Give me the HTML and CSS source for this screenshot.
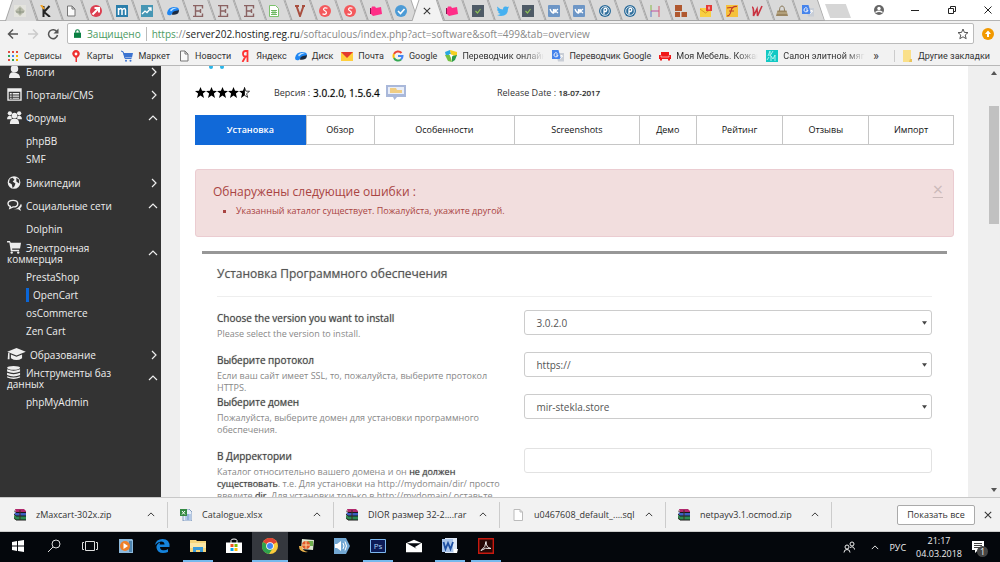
FILE: index.html
```html
<!DOCTYPE html>
<html lang="ru">
<head>
    <meta charset="UTF-8">
    <meta name="viewport" content="width=device-width, initial-scale=1.0">
    <title>Softaculous - OpenCart</title>
    <link rel="stylesheet" href="styles.css">
</head>
<body>

<!-- shared icons -->
<svg class="defs" aria-hidden="true">
    <symbol id="doc" viewBox="0 0 12 12"><path d="M2.500 1h4.500l3 3v7H2.500z M7 1v3h3" fill="#fafafa" stroke="#777"/></symbol>
    <symbol id="letter-e" viewBox="0 0 12 12"><path d="M1 .5h9.500v3M1 11.500h9.500V8.500M3.500 .5v11M3.500 6h5M8.500 4v4" fill="none" stroke="#8a6262" stroke-width="1.400"/></symbol>
    <symbol id="disk" viewBox="0 0 12 12"><path d="M0 8Q1 2 7 2q5 0 5 3-1 2-4 2.500T4 10Q0 11 0 8z" fill="#1f86f2"/><path d="M5 9.500q0-3 3-3.500t4-1q0 4-3.500 4.500T5 9.500z" fill="#1b2a40"/><path d="M3 5q3-3 7-2-4 .5-6 3.500z" fill="#bfe2ff"/></symbol>
    <symbol id="red-s" viewBox="0 0 12 12"><circle cx="6" cy="6" r="6" fill="#f4595c"/><path d="M8.500 3.200Q5 2 4.500 4.300C4.500 6 7.800 5.800 7.400 8 7 9.800 4.500 9.500 3.500 8.800" fill="none" stroke="#fff" stroke-width="1.200"/></symbol>
    <symbol id="pink" viewBox="0 0 12 12"><path d="M1 4l1-2.500h3L6 3l5-1 1 7-9 2L1 9z" fill="#ff2d87"/><path d="M.5 3v6" stroke="#8a1350"/></symbol>
    <symbol id="check-dark" viewBox="0 0 12 12"><path d="M0 0h12v12H0z" fill="#4e5a66"/><path d="M3.500 6l2 2 3-4" fill="none" stroke="#8fc257" stroke-width="1.200"/></symbol>
    <symbol id="vk" viewBox="0 0 12 12"><rect width="12" height="12" rx="1" fill="#6d96c6"/><path d="M2 4q1.500 4 3.500 4V4M5.500 6q1.500 0 2-2M7 4v4M10 4L7.500 6 10 8" fill="none" stroke="#fff" stroke-width="1.300"/></symbol>
    <symbol id="blue-r" viewBox="0 0 12 12"><circle cx="6" cy="6" r="6" fill="#2d6d9b"/><circle cx="6" cy="6" r="4.300" fill="none" stroke="#fff" stroke-width=".8"/><path d="M5 9.500V4.500q0-1.500 2-1.200 1.500 1.500 0 3.200H5" fill="none" stroke="#fff" stroke-width="1.300"/></symbol>
    <symbol id="translate" viewBox="0 0 12 12"><path d="M4 3h8v8.500H6z" fill="#c9ced6"/><path d="M0 0h6.500l2.500 9H0z" fill="#4684ec"/><path d="M5.500 3.500A2 2 0 1 0 6 5H4M8 6h3M9.500 5v1M8 9l2.500-3" fill="none" stroke="#fff" stroke-width=".9"/></symbol>
    <symbol id="winrar" viewBox="0 0 12 12"><path d="M1 0h9l2 2v2H2z" fill="#b0286c"/><path d="M1 3l1 1h10v3H2L0 6z" fill="#3a5fc0"/><path d="M0 6l2 1h10v4H2L0 10z" fill="#2d8a50"/><path d="M2 3.500h10M2 7h10M2 11h10" stroke="#191919"/><path d="M0 1.500l2 2M0 5l2 2M0 8.500l2 2.500M6 1v10" stroke="#3e2a25"/></symbol>
    <symbol id="up" viewBox="0 0 10 6"><path d="M1 5l4-4 4 4" fill="none" stroke="currentColor" stroke-width="1.200"/></symbol>
    <symbol id="right" viewBox="0 0 6 10"><path d="M1 1l4 4-4 4" fill="none" stroke="currentColor" stroke-width="1.200"/></symbol>
    <symbol id="cross" viewBox="0 0 10 10"><path d="M1 1l8 8M9 1L1 9" fill="none" stroke="currentColor" stroke-width="1.300"/></symbol>
    <symbol id="star" viewBox="0 0 12 12"><path d="M6 0l1.700 4.200 4.300.2-3.400 2.800L9.800 12 6 9.200 2.200 12l1.200-4.800L0 4.400l4.300-.2z"/></symbol>
</svg>

<header class="tab-strip">
    <div class="tabs">
        <button class="tab" aria-label="Tab 1"><svg viewBox="0 0 12 12"><path d="M0 0h12v12H0z" fill="#e3e3dd"/><path d="M6 1l5 5-5 5-5-5z" fill="#b9bcab"/><path d="M2 7h8M6 3v6" stroke="#8b9382"/></svg></button>
        <button class="tab" aria-label="Tab 2"><svg viewBox="0 0 12 12"><path d="M3.500 1v11M9.500 1L4 7l6 5" fill="none" stroke="#222" stroke-width="2"/><path d="M1 0l3 4" stroke="#f0a020" stroke-width="2"/></svg></button>
        <button class="tab" aria-label="Tab 3"><svg><use href="#doc"/></svg></button>
        <button class="tab" aria-label="Tab 4"><svg viewBox="0 0 12 12"><circle cx="6" cy="6" r="6" fill="#dc3f50"/><path d="M2.500 9.500l6-6M4.500 3h4.500v4.500" fill="none" stroke="#fff" stroke-width="2"/></svg></button>
        <button class="tab" aria-label="Tab 5"><svg viewBox="0 0 12 12"><path d="M0 0h12v12H0z" fill="#2a7eab"/><path d="M2.500 10V3M2.500 5q3-3 3.500 0v5M6 5q3-3 3.500 0v5" fill="none" stroke="#fff" stroke-width="1.500"/></svg></button>
        <button class="tab" aria-label="Tab 6"><svg viewBox="0 0 12 12"><path d="M0 0h12v12H0z" fill="#4696b4"/><path d="M1 9l3-3 2 1.500L10 3M7 3h3v3" fill="none" stroke="#fff" stroke-width="1.300"/></svg></button>
        <button class="tab" aria-label="Tab 7"><svg><use href="#disk"/></svg></button>
        <button class="tab" aria-label="Tab 8"><svg><use href="#letter-e"/></svg></button>
        <button class="tab" aria-label="Tab 9"><svg><use href="#letter-e"/></svg></button>
        <button class="tab" aria-label="Tab 10"><svg><use href="#letter-e"/></svg></button>
        <button class="tab" aria-label="Tab 11"><svg viewBox="0 0 12 12"><path d="M1.500 .5h6l3 3v8h-9z" fill="#fff" stroke="#7cc26d"/><path d="M3 5.500h6M3 7.500h6M3 9.500h6M5 5v5M7 5v5" stroke="#65b358" stroke-width=".9"/></svg></button>
        <button class="tab" aria-label="Tab 12"><svg viewBox="0 0 12 12"><path d="M1 1h4M8 1h3M2.500 1L6 11l3.500-10" fill="none" stroke="#a94f3f" stroke-width="2"/></svg></button>
        <button class="tab" aria-label="Tab 13"><svg><use href="#red-s"/></svg></button>
        <button class="tab" aria-label="Tab 14"><svg><use href="#red-s"/></svg></button>
        <button class="tab" aria-label="Tab 15"><svg><use href="#pink"/></svg></button>
        <button class="tab" aria-label="Tab 16"><svg viewBox="0 0 12 12"><circle cx="6" cy="6" r="6" fill="#4c9bd6"/><path d="M3 6l2.500 2.500L9.500 4" fill="none" stroke="#fff" stroke-width="1.600"/></svg></button>
        <button class="tab active" aria-label="Close tab"><svg class="tab-close"><use href="#cross"/></svg></button>
        <button class="tab" aria-label="Tab 18"><svg><use href="#pink"/></svg></button>
        <button class="tab" aria-label="Tab 19"><svg><use href="#check-dark"/></svg></button>
        <button class="tab" aria-label="Tab 20"><svg viewBox="0 0 12 12"><path d="M0 1.500q3 3 6 3Q6 1 9 1.500l1.500.5L12 1.500 11 4q0 7-7 7-2 0-4-1 2 0 3.500-1-2-.5-2.500-2h1Q0 6 0 4l1 .5Q0 3 0 1.500z" fill="#45b0f0"/></svg></button>
        <button class="tab" aria-label="Tab 21"><svg><use href="#check-dark"/></svg></button>
        <button class="tab" aria-label="Tab 22"><svg><use href="#vk"/></svg></button>
        <button class="tab" aria-label="Tab 23"><svg><use href="#vk"/></svg></button>
        <button class="tab" aria-label="Tab 24"><svg><use href="#blue-r"/></svg></button>
        <button class="tab" aria-label="Tab 25"><svg><use href="#blue-r"/></svg></button>
        <button class="tab" aria-label="Tab 26"><svg viewBox="0 0 12 12"><path d="M2 0v6" stroke="#88b848"/><path d="M2 6v6" stroke="#5e7fc4"/><path d="M2 6h8" stroke="#c050a0"/><path d="M10 1v11" stroke="#d65a70"/></svg></button>
        <button class="tab" aria-label="Tab 27"><svg viewBox="0 0 12 12"><path d="M0 0h7v6H0zM0 7h5v5H0zM6.500 7H12v5H6.500z" fill="#b0582f"/></svg></button>
        <button class="tab" aria-label="Tab 28"><svg viewBox="0 0 12 12"><path d="M0 3h11v9H0z" fill="#f8cf42"/><path d="M0 4l5.500 4L11 4" fill="none" stroke="#d89c20"/><path d="M6 0h6v6H6z" fill="#e53935"/><path d="M9 1.500v3" stroke="#fff"/></svg></button>
        <button class="tab" aria-label="Tab 29"><svg viewBox="0 0 12 12"><path d="M0 0h12v12H0z" fill="#f5c13a"/><path d="M1 11q3 0 4-5 1-5 6-4.500M3 6h5M1 3q4-1 6 0" fill="none" stroke="#c0392b" stroke-width="1.200"/></svg></button>
        <button class="tab" aria-label="Tab 30"><svg viewBox="0 0 12 12"><path d="M1 2q2 0 1.500 9L6 4l.5 7L11 1" fill="none" stroke="#c83240" stroke-width="1.600"/></svg></button>
        <button class="tab" aria-label="Tab 31"><svg viewBox="0 0 12 12"><path d="M3.500 6q0-5 2.500-5t2.500 5" fill="none" stroke="#8a7a5c"/><path d="M1.500 5.500h9L12 11H0z" fill="#9a8560"/><path d="M1 8h10" stroke="#c9b993"/></svg></button>
        <button class="tab" aria-label="Tab 32"><svg><use href="#translate"/></svg></button>
    </div>
    <button class="new-tab" aria-label="New tab"></button>
    <div class="window-buttons">
        <button aria-label="Profile"><svg viewBox="0 0 12 12"><circle cx="6" cy="6" r="5" fill="#666"/><circle cx="6" cy="4.500" r="1.700" fill="#fff"/><path d="M2.500 8.500q3.500-2.500 7 0" fill="none" stroke="#fff" stroke-width="1.500"/></svg></button>
        <button aria-label="Minimize"><svg viewBox="0 0 12 12"><path d="M2 6.500h8" stroke="#222"/></svg></button>
        <button aria-label="Restore"><svg viewBox="0 0 12 12"><path d="M2.500 4.500h5v5h-5zM4.500 4V2.500h5v5H8" fill="none" stroke="#222"/></svg></button>
        <button aria-label="Close"><svg viewBox="0 0 12 12"><path d="M2.500 2.500l7 7M9.500 2.500l-7 7" stroke="#222"/></svg></button>
    </div>
</header>

<div class="toolbar">
    <button aria-label="Back"><svg viewBox="0 0 12 12"><path d="M11 6H2M6 1.500L1.500 6 6 10.500" fill="none" stroke="#555" stroke-width="1.500"/></svg></button>
    <button aria-label="Forward"><svg viewBox="0 0 12 12"><path d="M1 6h9M6 1.500L10.500 6 6 10.500" fill="none" stroke="#ccc" stroke-width="1.500"/></svg></button>
    <button aria-label="Reload"><svg viewBox="0 0 12 12"><path d="M10 4A4.500 4.500 0 1 0 10.500 7" fill="none" stroke="#555" stroke-width="1.500"/><path d="M11.500 .5v5h-5z" fill="#555"/></svg></button>
    <div class="address">
        <svg class="lock" viewBox="0 0 8 10"><path d="M0 4h8v6H0z" fill="#0b8043"/><path d="M2 4V2.500q0-1.800 2-1.800t2 1.800V4" fill="none" stroke="#0b8043" stroke-width="1.300"/></svg>
        <span class="secure">Защищено</span>
        <span class="url"><span class="scheme">https</span>://<b>server202.hosting.reg.ru</b>/softaculous/index.php?act=software&amp;soft=499&amp;tab=overview</span>
        <svg class="bookmark-star" viewBox="0 0 12 12"><path d="M6 1l1.400 3.400 3.600.2-2.800 2.400 1 3.700L6 8.800l-3.200 1.900 1-3.700L1 4.600l3.600-.2z" fill="none" stroke="#555"/></svg>
    </div>
    <button aria-label="Update"><svg viewBox="0 0 12 12"><circle cx="6" cy="6" r="6" fill="#f29900"/><path d="M6 2.500l3 3.500H7v3H5V6H3z" fill="#fff"/></svg></button>
</div>

<nav class="bookmarks">
    <a href="#"><svg viewBox="0 0 12 12"><path d="M1 1h2v2H1zM1 9h2v2H1zM9 1h2v2H9z" fill="#e04a3f"/><path d="M5 1h2v2H5z" fill="#e04a3f"/><path d="M1 5h2v2H1zM5 9h2v2H5z" fill="#2fa35a"/><path d="M5 5h2v2H5z" fill="#4285f4"/><path d="M9 5h2v2H9zM9 9h2v2H9z" fill="#f4b400"/></svg>Сервисы</a>
    <a href="#"><svg viewBox="0 0 12 12"><path d="M6 0a3.800 3.800 0 0 1 3.800 4Q9.500 6.500 7 8v4H5.500V8Q2.500 6.500 2.200 4A3.800 3.800 0 0 1 6 0z" fill="#ee2f2f"/><circle cx="6" cy="4" r="1.400" fill="#fff"/></svg>Карты</a>
    <a href="#"><svg viewBox="0 0 12 12"><path d="M0 1l2 1 1.500 5.500H11L12 3H2.500z" fill="#3b73d1"/><path d="M0 1l2.200.8L4 8.500h6.500" fill="none" stroke="#3b73d1"/><circle cx="5" cy="10.800" r="1" fill="#3b73d1"/><circle cx="9.500" cy="10.800" r="1" fill="#3b73d1"/></svg>Маркет</a>
    <a href="#"><svg><use href="#doc"/></svg>Новости</a>
    <a href="#"><svg viewBox="0 0 12 12"><path d="M8.500 12V1H6.500Q4 1 4 3.800T6.500 6.500h2M6.500 6.500L3.500 12" fill="none" stroke="#f33" stroke-width="1.800"/></svg>Яндекс</a>
    <a href="#"><svg><use href="#disk"/></svg>Диск</a>
    <a href="#"><svg viewBox="0 0 12 12"><path d="M0 2h12v9H0z" fill="#ffcf3d"/><path d="M0 2h12L6 8z" fill="#e33a2e"/></svg>Почта</a>
    <a href="#"><svg viewBox="0 0 12 12"><path d="M9.500 3A4.500 4.500 0 0 0 2 4" fill="none" stroke="#ea4335" stroke-width="2"/><path d="M2 4a4.500 4.500 0 0 0 0 4" fill="none" stroke="#fbbc05" stroke-width="2"/><path d="M2 8a4.500 4.500 0 0 0 7 1.500" fill="none" stroke="#34a853" stroke-width="2"/><path d="M9 9.500Q10.500 8 10.500 6H6" fill="none" stroke="#4285f4" stroke-width="2"/></svg>Google</a>
    <a href="#" class="long"><svg viewBox="0 0 12 12"><path d="M0 2l5-2 1 4-5 2z" fill="#2aa8e0"/><path d="M5 0l7 2v4L6 5z" fill="#f5d020"/><path d="M0 5l5 0 2 7-4-1z" fill="#74c041"/><path d="M7 6l5-1-2 5-3 2z" fill="#2b9b4a"/><path d="M4 4l4 1-1.500 3z" fill="#fff"/></svg><span>Переводчик онлайн</span></a>
    <a href="#"><svg><use href="#translate"/></svg>Переводчик Google</a>
    <a href="#" class="long"><svg viewBox="0 0 12 12"><path d="M2 2h8v3h2v4H0V5h2zM1 9h2v1.500H1zM9 9h2v1.500H9z" fill="#f01818"/><path d="M2 5.500V7h8V5.500" fill="none" stroke="#fff" stroke-width=".6"/></svg><span>Моя Мебель. Кожан</span></a>
    <a href="#" class="long"><svg viewBox="0 0 12 12"><path d="M0 0h12v12H0z" fill="#12c9c4"/><path d="M2 6l2-5v5l3-5M5 11V6l2 3 2-4v6M1 10l2-3" fill="none" stroke="#bdf6f0" stroke-width=".9"/></svg><span>Салон элитной мягк</span></a>
    <span class="more">»</span>
    <a href="#" class="other"><svg viewBox="0 0 12 12"><path d="M2 0h8v10l-1 2H2z" fill="#fae08a"/><path d="M9 9h2v3H8z" fill="#eac45a"/></svg>Другие закладки</a>
</nav>

<div class="viewport">
    <nav class="sidebar">
        <button class="group"><span><svg viewBox="0 0 16 14"><circle cx="8" cy="4" r="4"/><path d="M2 14q0-7 6-6t6 6z"/></svg>Блоги</span><svg class="chevron right"><use href="#right"/></svg></button>
        <button class="group"><span><svg viewBox="0 0 16 14"><path d="M1 1h14v12H1z" fill="none" stroke="#eee" stroke-width="1.500"/><path d="M1 1h14v3H1zM3 5.500h2v1.500H3zM3 8h2v1.500H3zM3 10.500h2v1H3zM6 5.500h7v1.500H6zM6 8h7v1.500H6zM6 10.500h7v1H6z"/></svg>Порталы/CMS</span><svg class="chevron right"><use href="#right"/></svg></button>
        <button class="group"><span><svg viewBox="0 0 16 14"><circle cx="3" cy="2.500" r="2.300"/><circle cx="13" cy="2.500" r="2.300"/><path d="M0 9q0-4 3-4l2 1v3zM16 9q0-4-3-4l-2 1v3z"/><circle cx="8" cy="5" r="3"/><path d="M3 14q0-6 5-5.500 5-.5 5 5.500z"/></svg>Форумы</span><svg class="chevron"><use href="#up"/></svg></button>
        <ul>
            <li><a href="#">phpBB</a></li>
            <li><a href="#">SMF</a></li>
        </ul>
        <button class="group"><span><svg viewBox="0 0 16 14"><circle cx="7.500" cy="7" r="6.800"/><path d="M3 3l3-1 2 2-2 2 3 2-1 3-2 2-1-4-3-2zM10 2l3 2v4l-3-2z" fill="#333"/></svg>Википедии</span><svg class="chevron right"><use href="#right"/></svg></button>
        <button class="group"><span><svg viewBox="0 0 16 14"><path d="M15 5q2 3-1 5l1 3-3-2H7q5 0 8-6z"/><path d="M6.500 1.500q5 0 5 3.500t-5 3.500L3 10l.5-2Q1 7 1 5q0-3.500 5.500-3.500z" fill="none" stroke="#eee" stroke-width="1.500"/></svg>Социальные сети</span><svg class="chevron"><use href="#up"/></svg></button>
        <ul>
            <li><a href="#">Dolphin</a></li>
        </ul>
        <button class="group wrap"><span><svg viewBox="0 0 16 14"><path d="M0 0h3l1 2h11l-1 6H5.500v1.500H13V11H4L2.500 1.500H0z"/><circle cx="5" cy="12.500" r="1.300"/><circle cx="12" cy="12.500" r="1.300"/></svg>Электронная<br>коммерция</span><svg class="chevron"><use href="#up"/></svg></button>
        <ul>
            <li><a href="#">PrestaShop</a></li>
            <li><a href="#" class="current">OpenCart</a></li>
            <li><a href="#">osCommerce</a></li>
            <li><a href="#">Zen Cart</a></li>
        </ul>
        <button class="group"><span><svg class="wide" viewBox="0 0 20 14"><path d="M10 0l10 4-10 4L0 4z"/><path d="M4 7l6 2.500L16 7v4q-6 4-12 0zM1 5h1.500v7H.5z"/></svg>Образование</span><svg class="chevron right"><use href="#right"/></svg></button>
        <button class="group wrap"><span><svg viewBox="0 0 16 14"><ellipse cx="7" cy="2" rx="7" ry="2"/><path d="M0 3.500q7 3 14 0V6q-7 3-14 0zM0 7.300q7 3 14 0v2.500q-7 3-14 0zM0 11q7 3 14 0v1.500q-7 3-14 0z"/></svg>Инструменты баз<br>данных</span><svg class="chevron"><use href="#up"/></svg></button>
        <ul>
            <li><a href="#">phpMyAdmin</a></li>
        </ul>
    </nav>

    <main class="content">
        <svg class="logo" viewBox="0 0 16 4"><circle cx="2" cy="1" r="2"/><circle cx="13" cy="1" r="2"/></svg>
        <div class="info">
            <div class="stars">
                <svg><use href="#star"/></svg><svg><use href="#star"/></svg><svg><use href="#star"/></svg><svg><use href="#star"/></svg><svg viewBox="0 0 12 12"><path d="M6 .5l1.500 4 4 .2-3.200 2.600 1.200 4L6 9z" fill="#fff" stroke="#000" stroke-width=".8"/><path d="M6 0v9.200L2.200 12l1.200-4.800L0 4.400l4.300-.2z"/></svg>
            </div>
            <div class="version">Версия : <b>3.0.2.0, 1.5.6.4</b>
                <svg viewBox="0 0 20 15"><path d="M0 0h20v12h-9l-2.500 3L7 12H0z" fill="#a9b8da"/><path d="M2 2h16v7H2z" fill="#e9eef8"/><path d="M4 3h6l1 2h5v3H4z" fill="#f0cd83"/></svg>
            </div>
            <div class="release">Release Date : <b>18-07-2017</b></div>
        </div>

        <nav class="page-tabs">
            <a href="#" class="selected">Установка</a>
            <a href="#">Обзор</a>
            <a href="#">Особенности</a>
            <a href="#">Screenshots</a>
            <a href="#">Демо</a>
            <a href="#">Рейтинг</a>
            <a href="#">Отзывы</a>
            <a href="#">Импорт</a>
        </nav>

        <div class="alert">
            <div>
                <h2>Обнаружены следующие ошибки :</h2>
                <ul>
                    <li>Указанный каталог существует. Пожалуйста, укажите другой.</li>
                </ul>
            </div>
            <a href="#" class="close">×</a>
        </div>

        <form class="install">
            <h3>Установка Программного обеспечения</h3>
            <div class="field spaced">
                <div>
                    <label for="version">Choose the version you want to install</label>
                    <p>Please select the version to install.</p>
                </div>
                <select id="version"><option>3.0.2.0</option><option>1.5.6.4</option></select>
            </div>
            <div class="field">
                <div>
                    <label for="protocol">Выберите протокол</label>
                    <p>Если ваш сайт имеет SSL, то, пожалуйста, выберите протокол HTTPS.</p>
                </div>
                <select id="protocol"><option>https://</option><option>http://</option></select>
            </div>
            <div class="field spaced">
                <div>
                    <label for="domain">Выберите домен</label>
                    <p>Пожалуйста, выберите домен для установки программного обеспечения.</p>
                </div>
                <select id="domain"><option>mir-stekla.store</option></select>
            </div>
            <div class="field">
                <div>
                    <label for="directory">В Дирректории</label>
                    <p>Каталог относительно вашего домена и он <b>не должен существовать</b>. т.е. Для установки на http://mydomain/dir/ просто введите <b>dir</b>. Для установки только в http://mydomain/ оставьте</p>
                </div>
                <input type="text" id="directory">
            </div>
        </form>
    </main>

    <div class="scrollbar">
        <svg viewBox="0 0 6 4"><path d="M3 0l3 4H0z"/></svg>
        <div class="thumb"></div>
        <svg viewBox="0 0 6 4"><path d="M0 0h6L3 4z"/></svg>
    </div>
</div>

<div class="downloads">
    <button class="file"><svg><use href="#winrar"/></svg><span>zMaxcart-302x.zip</span><svg class="caret"><use href="#up"/></svg></button>
    <button class="file"><svg viewBox="0 0 12 12"><path d="M3 0h6l3 3v9H3z" fill="#e4edf8" stroke="#5b7cab" stroke-width=".7"/><path d="M5 6h6M5 8h6M5 10h6M8 5v6" stroke="#5b86c4" stroke-width=".7"/><path d="M0 0h7v7H0z" fill="#358a43"/><path d="M2 2l3 3.500M5 2L2 5.500" stroke="#fff"/></svg><span>Catalogue.xlsx</span><svg class="caret"><use href="#up"/></svg></button>
    <button class="file"><svg><use href="#winrar"/></svg><span>DIOR размер 32-2....rar</span><svg class="caret"><use href="#up"/></svg></button>
    <button class="file"><svg viewBox="0 0 12 12"><path d="M2 .5h6l2.500 2.500v8.500H2z M8 .5V3h2.500" fill="#fff" stroke="#bbb"/></svg><span>u0467608_default_....sql</span><svg class="caret"><use href="#up"/></svg></button>
    <button class="file"><svg><use href="#winrar"/></svg><span>netpayv3.1.ocmod.zip</span><svg class="caret"><use href="#up"/></svg></button>
    <button class="show-all">Показать все</button>
    <button class="hide" aria-label="Close downloads"><svg><use href="#cross"/></svg></button>
</div>

<footer class="taskbar">
    <button aria-label="Start"><svg viewBox="0 0 16 16"><path d="M2 4l5-1v4.500H2zM8 3l6-1v5.500H8zM2 8.500h5V13l-5-1zM8 8.500h6V14l-6-1z" fill="#fff"/></svg></button>
    <button aria-label="Search"><svg viewBox="0 0 16 16"><circle cx="10" cy="6" r="4" fill="none" stroke="#ddd"/><path d="M7 9l-5 5" stroke="#ddd"/></svg></button>
    <button aria-label="Task view"><svg viewBox="0 0 16 16"><path d="M3.500 3.500h9v9h-9zM2 4.500H.5v7H2M14 4.500h1.500v7H14" fill="none" stroke="#ddd"/></svg></button>
    <button aria-label="Media player"><svg viewBox="0 0 16 16"><path d="M1 1h13l1 1v13H1z" fill="#8db9dc"/><path d="M11 3h3v11h-3z" fill="#4e84b0"/><circle cx="7" cy="8" r="5" fill="#ef7f28"/><path d="M5.500 5l4.500 3-4.500 3z" fill="#fff"/></svg></button>
    <button aria-label="Edge"><svg viewBox="0 0 16 16"><path d="M3 9h12.500Q16 1 8.500 1 2 1 1 7q3-3.500 6-3.500 3.500 0 3.500 3H5.500Q7 3.500 5 5 2 7 2.500 10q1 5 6.500 5 3 0 5-1v-3q-2 1.500-5 1.200Q6 12 6 9z" fill="#1583dc"/></svg></button>
    <button aria-label="Explorer" class="open"><svg viewBox="0 0 16 16"><path d="M0 2h6l1 1h9v11H0z" fill="#f5d57b"/><path d="M0 5h16v5H0z" fill="#fbe7a5"/><path d="M3 14V9h10v5h-3v-2H6v2z" fill="#3a9ad9"/></svg></button>
    <button aria-label="Store"><svg viewBox="0 0 16 16"><path d="M5 5V2.500Q5 1 8 1t3 1.500V5" fill="none" stroke="#fff"/><path d="M0 4.500h16V15H0z" fill="#fff"/><path d="M4.500 6h3v3h-3z" fill="#f25022"/><path d="M8.500 6h3v3h-3z" fill="#7fba00"/><path d="M4.500 10h3v3h-3z" fill="#00a4ef"/><path d="M8.500 10h3v3h-3z" fill="#ffb900"/></svg></button>
    <button aria-label="Chrome" class="open focused"><svg viewBox="0 0 16 16"><circle cx="8" cy="8" r="8" fill="#fbcb3b"/><path d="M8 8L1 4a8 8 0 0 1 14 0z" fill="#e04435"/><path d="M8 8L1 4a8 8 0 0 0 6 12l4-6z" fill="#2fa34d"/><circle cx="8" cy="8" r="3.800" fill="#fff"/><circle cx="8" cy="8" r="3" fill="#4285f4"/></svg></button>
    <button aria-label="Photos"><svg viewBox="0 0 16 16"><path d="M4 1l12 1-1 10-12-1z" fill="#dfe9d2"/><path d="M10 3h5v5h-5z" fill="#6faf4e"/><circle cx="8" cy="7" r="4" fill="#e0592a"/><path d="M4 7h8M8 3v8" stroke="#fbd9a0"/><path d="M1 8q0 7 9 6-6-1-6-6z" fill="#e8b04c"/></svg></button>
    <button aria-label="Sound"><svg viewBox="0 0 16 16"><path d="M0 0h12l4 8-4 8H0z" fill="#72a7d3"/><path d="M1 6h2l4-3v10l-4-3H1z" fill="#fff"/><path d="M9 5q2 3 0 6M11 3.500q3 4.500 0 9" fill="none" stroke="#fff"/></svg></button>
    <button aria-label="Photoshop" class="open"><svg viewBox="0 0 16 16"><path d="M.5 1.500h15v13H.5z" fill="#0c1b57" stroke="#7cb6ee"/><text x="8" y="11" text-anchor="middle">Ps</text></svg></button>
    <button aria-label="Mail"><svg viewBox="0 0 18 16"><path d="M0 5l9-4 9 4v10H0z" fill="#fff"/><path d="M1 5h16l-7 4 2 2z" fill="#060a10"/></svg></button>
    <button aria-label="Word" class="open"><svg viewBox="0 0 16 16"><path d="M3 0h12v15H3z" fill="#dfe9f7"/><path d="M0 1h11v13H0z" fill="#aac5ea"/><path d="M1.500 4l2 7L6 5l2.500 6 2.500-7" fill="none" stroke="#1d4fa3" stroke-width="1.800"/><path d="M12 11h4l-1 4h-3z" fill="#fff"/></svg></button>
    <button aria-label="Acrobat" class="open"><svg viewBox="0 0 16 16"><path d="M.7 .7h14.600v14.600H.7z" fill="#260806" stroke="#c8190f" stroke-width="1.400"/><path d="M3 12.500q5-3.500 5-9 0 6 5 7-6-1.500-10 2z" fill="none" stroke="#eee"/></svg></button>
    <div class="tray">
        <svg viewBox="0 0 12 12"><circle cx="4" cy="6" r="2"/><path d="M1 11.500q0-3 3-3t3 3"/><circle cx="9" cy="3" r="2"/><path d="M7 6.500q4-2 4.500 2"/></svg>
        <svg class="caret"><use href="#up"/></svg>
        <span class="lang">РУС</span>
        <time datetime="2018-03-04T21:17">21:17<br>04.03.2018</time>
        <div class="notes"><svg viewBox="0 0 12 12"><path d="M0 0h12v9H6l-3 3V9H0z" fill="#fff" stroke="none"/><path d="M2 2.500h8M2 4.500h8M2 6.500h6" stroke="#111" stroke-width=".8"/></svg><span>1</span></div>
    </div>
</footer>

</body>
</html>
```
FILE: styles.css
```css
* {
    box-sizing: border-box;
}
body {
    display: flex;
    flex-direction: column;
    height: 100vh;
    margin: 0;
    overflow: hidden;
    font-family: "Open Sans", "Noto Sans", sans-serif;
    font-size: 9px;
    color: #333;
    background: #f2f2f2;
}
button {
    padding: 0;
    border: none;
    background: none;
    font: inherit;
    color: inherit;
}
a {
    color: inherit;
    text-decoration: none;
}
ul {
    list-style: none;
    margin: 0;
    padding: 0;
}
svg {
    display: block;
    flex: none;
    width: 12px;
    height: 12px;
}
.defs {
    position: absolute;
    width: 0;
    height: 0;
}

/* browser tabs */
.tab-strip {
    display: flex;
    flex: none;
    height: 21px;
    background: #fff;
    border-bottom: 1px solid #b4b4b4;
}
.tabs {
    display: flex;
    flex: 0 1 825px;
    padding-left: 5px;
}
.tab {
    position: relative;
    display: flex;
    flex: 1;
    align-items: center;
    justify-content: center;
    min-width: 0;
    height: 21px;
    margin-right: -7px;
    padding-right: 2px;
}
.tab:last-child {
    margin-right: 0;
}
/* outline and fill; each tab tucks under the slanted edge of the one before */
.tab::before,
.tab::after {
    content: "";
    position: absolute;
    inset: 0;
    background: #a6a6a6;
    clip-path: polygon(0 0, calc(100% - 7px) 0, 100% 100%, 7px 100%);
}
.tab::after {
    background: #d9d9d9;
    clip-path: polygon(1px 0, calc(100% - 8px) 0, calc(100% - 1px) 20px, 8px 20px);
}
.tab:first-child::before,
.tab.active::before {
    clip-path: polygon(7px 0, calc(100% - 7px) 0, 100% 100%, 0 100%);
}
.tab:first-child::after,
.tab.active::after {
    clip-path: polygon(8px 0, calc(100% - 8px) 0, calc(100% - 1px) 100%, 1px 100%);
}
.tab.active::after {
    background: #f2f2f2;
}
.tab.active {
    z-index: 2;
}
.tab svg {
    position: relative;
    z-index: 1;
}
.tab .tab-close {
    width: 8px;
    height: 8px;
}
.new-tab {
    width: 26px;
    height: 14px;
    margin-top: 4px;
    background: #d6d6d6;
    clip-path: polygon(0 0, 80% 0, 100% 100%, 20% 100%);
}
.window-buttons {
    display: flex;
    align-items: center;
    justify-content: space-between;
    width: 121px;
    margin: 0 6px 0 auto;
}

/* address bar */
.toolbar {
    display: flex;
    flex: none;
    align-items: center;
    gap: 8px;
    height: 25px;
    padding: 0 6px 0 7px;
}
.address {
    display: flex;
    flex: 1;
    align-items: center;
    height: 21px;
    padding: 0 4px 0 6px;
    border: 1px solid #bbb;
    border-radius: 2px;
    background: #fff;
    font-size: 10px;
    white-space: nowrap;
}
.lock {
    width: 7px;
    height: 9px;
}
.secure {
    margin: 0 5px 0 6px;
    padding-right: 5px;
    border-right: 1px solid #bbb;
    color: #4b9a62;
}
.url {
    flex: 1;
    color: #888;
}
.url b {
    font-weight: normal;
    color: #222;
}
.url .scheme {
    color: #4b9a62;
}

/* bookmarks bar */
.bookmarks {
    display: flex;
    flex: none;
    align-items: center;
    gap: 8px;
    height: 20px;
    padding: 0 10px 0 7px;
    border-bottom: 1px solid #b8b8b8;
    font-family: Roboto, "Open Sans", sans-serif;
    white-space: nowrap;
}
.bookmarks a {
    display: flex;
    align-items: center;
    gap: 5px;
}
.bookmarks .long span {
    width: 82px;
    -webkit-mask-image: linear-gradient(to right, #000 75%, transparent);
    mask-image: linear-gradient(to right, #000 75%, transparent);
}
.bookmarks .more {
    font-size: 12px;
    line-height: 12px;
}
.bookmarks .other {
    margin-left: auto;
    padding-left: 6px;
    border-left: 1px solid #ccc;
}

/* page */
.viewport {
    display: flex;
    flex: 1;
    min-height: 0;
    overflow: hidden;
    background: #efefef;
}
.sidebar {
    flex: none;
    width: 161px;
    margin-top: -6px;
    background: #333;
    color: #eee;
    font-size: 10px;
}
.group {
    display: flex;
    align-items: center;
    justify-content: space-between;
    width: 100%;
    height: 23px;
    padding: 0 3px 0 7px;
    line-height: 11px;
    text-align: left;
}
.group.wrap {
    height: 24px;
}
.group span svg {
    display: inline-block;
    width: 15px;
    height: 13px;
    margin-right: 4px;
    vertical-align: -2px;
    fill: #eee;
}
.group span svg.wide {
    width: 19px;
}
.chevron {
    width: 10px;
    height: 6px;
}
.chevron.right {
    width: 8px;
    height: 10px;
}
.sidebar ul {
    padding: 3px 0 3px 26px;
}
.sidebar li {
    height: 18px;
    line-height: 18px;
}
.sidebar .current {
    padding-left: 4px;
    border-left: 3px solid #0a66d8;
}
.content {
    flex: 1;
    min-width: 0;
    margin: 0 20px 0 19px;
    padding: 0 14px 0 15px;
    background: #fff;
}
.logo {
    width: 16px;
    height: 4px;
    margin-left: 14px;
    fill: #2bb5e8;
}
.info {
    display: grid;
    grid-template-columns: 79px 223px 1fr;
    align-items: center;
    height: 45px;
}
.info b {
    font-weight: normal;
    color: #000;
    text-shadow: 0 0 1px #888;
}
.stars {
    display: flex;
}
.stars svg {
    width: 11px;
    height: 11px;
}
.version {
    display: flex;
    align-items: center;
    gap: 3px;
}
.version b {
    font-size: 10px;
}
.version svg {
    width: 20px;
    height: 15px;
    margin-left: 3px;
}
.release b {
    font-size: 8px;
}
.page-tabs {
    display: grid;
    grid-template-columns: 110fr 68fr 141fr 125fr 57fr 87fr 86fr 85fr;
    border: 1px solid #c6c6c6;
    color: #111;
    line-height: 28px;
    text-align: center;
}
.page-tabs a + a {
    border-left: 1px solid #c6c6c6;
}
.page-tabs .selected {
    margin: -1px 0 -1px -1px;
    line-height: 30px;
    background: #1169d8;
    color: #fff;
    font-weight: 600;
}
.alert {
    display: flex;
    justify-content: space-between;
    height: 68px;
    margin-top: 24px;
    padding: 12px 10px 0 17px;
    border: 1px solid #ebccd1;
    border-radius: 3px;
    background: #f2dede;
    color: #a94442;
}
.alert h2 {
    margin: 0;
    font-size: 12px;
    font-weight: normal;
    line-height: 20px;
}
.alert ul {
    padding-left: 23px;
    list-style: square;
    line-height: 18px;
}
.alert .close {
    font-size: 18px;
    line-height: 15px;
    text-decoration: underline;
    color: #cbb9b9;
}
.install {
    margin: 14px 7px 0;
    padding: 0 15px;
    border-top: 3px solid #979797;
    color: #555;
}
.install h3 {
    margin: 0 0 13px;
    padding: 10px 0 12px;
    border-bottom: 1px solid #eee;
    font-size: 12px;
    font-weight: normal;
    line-height: 20px;
    text-shadow: 0 0 1px #aaa;
}
.field {
    display: grid;
    grid-template-columns: 43fr 57fr;
    align-items: start;
}
.field.spaced {
    margin-bottom: 12px;
}
.field > div {
    padding-right: 16px;
}
.field label {
    display: block;
    margin-bottom: 2px;
    font-size: 10px;
    line-height: 16px;
    color: #444;
    text-shadow: 0 0 1px #888;
}
.field p {
    margin: 0;
    line-height: 12px;
    color: #888;
}
.field b {
    font-weight: normal;
    color: #444;
    text-shadow: 0 0 1px #888;
}
.field select,
.field input {
    width: 100%;
    height: 25px;
    padding: 0 8px 0 11px;
    border: 1px solid #ccc;
    border-radius: 3px;
    background: #fff;
    font-family: inherit;
    font-size: 10px;
    color: #555;
}
.field select {
    appearance: none;
    background: #fff url("data:image/svg+xml,%3Csvg xmlns='http://www.w3.org/2000/svg' viewBox='0 0 6 4'%3E%3Cpath d='M0 0h6L3 4z' fill='%23444'/%3E%3C/svg%3E") no-repeat right 4px center / 5px 4px;
}
.field input {
    border-color: #e2e2e2;
}
.scrollbar {
    display: flex;
    flex: none;
    flex-direction: column;
    align-items: center;
    width: 12px;
    padding: 5px 0;
}
.scrollbar svg {
    width: 6px;
    height: 4px;
    fill: #555;
}
.scrollbar .thumb {
    width: 10px;
    height: 118px;
    margin: 31px 0 auto;
    background: #c1c1c1;
}

/* downloads */
.downloads {
    display: flex;
    flex: none;
    align-items: center;
    height: 35px;
    padding: 0 8px 0 2px;
    border-top: 1px solid #c8c8c8;
    border-bottom: 1px solid #ccc;
}
.file {
    display: flex;
    flex: 0 1 166px;
    align-items: center;
    gap: 10px;
    height: 26px;
    padding: 0 12px;
    border-right: 1px solid #ccc;
    white-space: nowrap;
}
.caret {
    width: 8px;
    height: 5px;
    margin-left: auto;
}
.show-all {
    width: 78px;
    height: 20px;
    margin-left: auto;
    border: 1px solid #aaa;
    border-radius: 2px;
    background: #fff;
}
.hide svg {
    width: 8px;
    height: 8px;
    margin-left: 9px;
}

/* taskbar */
.taskbar {
    display: flex;
    flex: none;
    height: 30px;
    background: #04070c;
    color: #eee;
}
.taskbar button {
    display: flex;
    align-items: center;
    justify-content: center;
    width: 36px;
    border-bottom: 2px solid transparent;
}
.taskbar button svg {
    width: 16px;
    height: 16px;
}
.taskbar text {
    fill: #a8d0f5;
    font-size: 8px;
}
.taskbar .open {
    background: linear-gradient(#76b9ed, #76b9ed) center bottom / 30px 2px no-repeat border-box;
}
.taskbar .focused {
    background: #35383e;
    border-bottom-color: #76b9ed;
}
.tray {
    display: flex;
    align-items: center;
    gap: 10px;
    margin-left: auto;
    padding-right: 16px;
    text-align: center;
}
.tray svg {
    fill: none;
    stroke: #eee;
}
.tray .caret {
    margin-left: 6px;
}
.tray time {
    line-height: 13px;
}
.notes {
    position: relative;
}
.notes span {
    position: absolute;
    left: 5px;
    top: 5px;
    width: 11px;
    height: 11px;
    border-radius: 50%;
    background: #444;
    line-height: 11px;
}
```
